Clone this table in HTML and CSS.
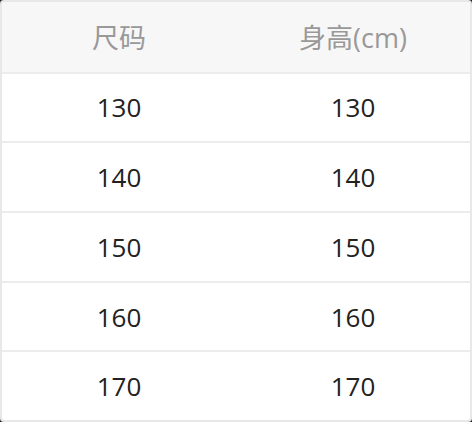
FILE: index.html
```html
<!DOCTYPE html>
<html>
<head>
<meta charset="utf-8">
<link rel="stylesheet" href="styles.css">
</head>
<body>
<div class="table">
  <div class="row head"><div class="cell">尺码</div><div class="cell">身高(cm)</div></div>
  <div class="row"><div class="cell">130</div><div class="cell">130</div></div>
  <div class="row"><div class="cell">140</div><div class="cell">140</div></div>
  <div class="row"><div class="cell">150</div><div class="cell">150</div></div>
  <div class="row"><div class="cell">160</div><div class="cell">160</div></div>
  <div class="row last"><div class="cell">170</div><div class="cell">170</div></div>
</div>
</body>
</html>
```
FILE: styles.css
```css
html, body { margin: 0; padding: 0; background: #2a2a2a; }
.table {
  width: 472px;
  height: 422px;
  box-sizing: border-box;
  border: 2px solid #e8e8e8;
  border-radius: 4px;
  background: #fff;
  overflow: hidden;
  font-family: "Open Sans", "Noto Sans CJK SC", sans-serif;
  display: flex;
  flex-direction: column;
}
.row {
  display: grid;
  grid-template-columns: 1fr 1fr;
  height: 70px;
  box-sizing: border-box;
  border-bottom: 2px solid #ececec;
  font-size: 26px;
  color: #222;
}
.row.last { border-bottom: none; height: 68px; }
.head {
  height: 72px;
  background: #f7f7f7;
  color: #999;
  font-size: 27px;
}
.cell {
  display: flex;
  align-items: center;
  justify-content: center;
}
```
